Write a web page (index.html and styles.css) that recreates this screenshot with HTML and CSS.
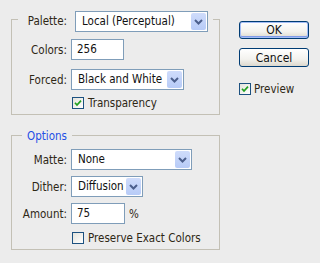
FILE: index.html
```html
<!DOCTYPE html>
<html>
<head>
    <title>Save for Web - Palette Options</title>
    <link rel="stylesheet" href="styles.css">
</head>
<body>
    <div class="dialog">
        <div class="main">
            <div class="group">
                <div class="group-head head-palette">
                    <span class="rule rule-left"></span>
                    <label class="head-label">Palette:</label>
                    <div class="select palette-select">
                        <span class="select-text">Local (Perceptual)</span>
                        <span class="drop"><svg width="15" height="19" viewBox="0 0 15 19"><path d="M4 8 L7.5 11.5 L11 8" /></svg></span>
                    </div>
                    <span class="rule rule-right"></span>
                </div>
                <div class="group-body body-top">
                    <label class="field-label">Colors:</label>
                    <div class="textbox colors-box">256</div>

                    <label class="field-label">Forced:</label>
                    <div class="select forced-select">
                        <span class="select-text">Black and White</span>
                        <span class="drop"><svg width="15" height="19" viewBox="0 0 15 19"><path d="M4 8 L7.5 11.5 L11 8" /></svg></span>
                    </div>

                    <div class="check-row top-check">
                        <span class="checkbox"><svg width="10" height="10" viewBox="0 0 10 10"><path d="M2 4.8 L4 7 L8 2.6" /></svg></span>
                        <span>Transparency</span>
                    </div>
                </div>
            </div>

            <div class="group group-options">
                <div class="group-head head-options">
                    <span class="rule rule-left wide"></span>
                    <span class="group-title">Options</span>
                    <span class="rule rule-right"></span>
                </div>
                <div class="group-body body-options">
                    <label class="field-label">Matte:</label>
                    <div class="select matte-select">
                        <span class="select-text">None</span>
                        <span class="drop"><svg width="15" height="19" viewBox="0 0 15 19"><path d="M4 8 L7.5 11.5 L11 8" /></svg></span>
                    </div>

                    <label class="field-label">Dither:</label>
                    <div class="select dither-select">
                        <span class="select-text">Diffusion</span>
                        <span class="drop"><svg width="15" height="19" viewBox="0 0 15 19"><path d="M4 8 L7.5 11.5 L11 8" /></svg></span>
                    </div>

                    <label class="field-label">Amount:</label>
                    <div class="amount-field">
                        <div class="textbox amount-box">75</div>
                        <span class="unit">%</span>
                    </div>

                    <div class="check-row bottom-check">
                        <span class="checkbox"></span>
                        <span>Preserve Exact Colors</span>
                    </div>
                </div>
            </div>
        </div>

        <div class="side">
            <button class="btn btn-default">OK</button>
            <button class="btn">Cancel</button>
            <div class="check-row preview-check">
                <span class="checkbox"><svg width="10" height="10" viewBox="0 0 10 10"><path d="M2 4.8 L4 7 L8 2.6" /></svg></span>
                <span>Preview</span>
            </div>
        </div>
    </div>
</body>
</html>
```

FILE: styles.css
```css
:root {
    --group-line: #c3c0b5;
    --field-border: #7f9db9;
    --label-color: #2e2715;
    --title-blue: #1f4fe6;
}

body {
    margin: 0;
    background: #ececec;
    font-family: 'DejaVu Sans Condensed', 'DejaVu Sans', sans-serif;
    font-size: 11.5px;
    color: var(--label-color);
}

.dialog {
    display: flex;
    padding: 11px 0 0 11px;
}

.main {
    width: 209px;
}

/* group boxes */

.group-head {
    display: flex;
}

.head-palette {
    height: 21px;
}

.head-options {
    height: 14px;
    align-items: center;
    margin-top: 13px;
}

.rule {
    align-self: stretch;
    border-top: 1px solid var(--group-line);
}

.head-palette .rule {
    margin-top: 8px;
}

.head-options .rule {
    margin-top: 7px;
}

.rule-left {
    width: 6px;
    border-left: 1px solid var(--group-line);
}

.rule-left.wide {
    width: 10px;
}

.rule-right {
    flex: 1;
    border-right: 1px solid var(--group-line);
}

.head-palette .rule-right {
    margin-left: 5px;
}

.head-label {
    width: 49px;
    padding-right: 8px;
    text-align: right;
    line-height: 21px;
}

.group-title {
    color: var(--title-blue);
    padding: 1px 5px 0;
    line-height: 14px;
}

.group-body {
    display: grid;
    grid-template-columns: 55px auto;
    column-gap: 4px;
    align-items: center;
    justify-items: start;
    border: 1px solid var(--group-line);
    border-top: none;
}

.body-top {
    row-gap: 9px;
    padding: 7px 0 5px;
}

.body-options {
    row-gap: 6px;
    padding: 7px 0 5px;
}

.field-label {
    justify-self: end;
    white-space: nowrap;
}

/* inputs */

.textbox,
.select {
    box-sizing: border-box;
    height: 21px;
    border: 1px solid var(--field-border);
    background: #fff;
    color: #111;
    line-height: 19px;
}

.textbox {
    padding-left: 5px;
}

.colors-box {
    width: 53px;
}

.amount-box {
    width: 54px;
}

.select {
    display: flex;
    justify-content: space-between;
    padding: 1px;
}

.select-text {
    padding-left: 5px;
    line-height: 17px;
    white-space: nowrap;
}

.drop {
    width: 15px;
    height: 17px;
    background: linear-gradient(#cfdcfb, #b7cbf7);
    border-radius: 2px;
    overflow: hidden;
}

.drop svg {
    display: block;
    margin-top: -1px;
}

.drop path {
    fill: none;
    stroke: #4c5f8c;
    stroke-width: 2;
}

.palette-select {
    width: 133px;
}

.forced-select {
    width: 113px;
}

.matte-select {
    width: 121px;
}

.dither-select {
    width: 72px;
}

.amount-field {
    display: flex;
    align-items: center;
    gap: 4px;
}

/* checkboxes */

.check-row {
    display: flex;
    align-items: center;
    gap: 4px;
    line-height: 12px;
    white-space: nowrap;
}

.top-check,
.bottom-check {
    grid-column: 2;
    margin-left: 1px;
    margin-top: -2px;
}

.bottom-check {
    margin-top: 2px;
}

.checkbox {
    box-sizing: border-box;
    width: 12px;
    height: 12px;
    border: 1px solid #1c5180;
    background: linear-gradient(135deg, #e3e3dc, #fff);
}

.checkbox svg {
    display: block;
}

.checkbox path {
    fill: none;
    stroke: #21a121;
    stroke-width: 1.7;
}

/* right column */

.side {
    display: flex;
    flex-direction: column;
    margin-left: 19px;
    padding-top: 10px;
}

.btn {
    box-sizing: border-box;
    width: 70px;
    height: 19px;
    padding: 0;
    border: 1px solid #003c74;
    border-radius: 3px;
    background: linear-gradient(#ffffff, #f3f2ee 60%, #dcd8cd);
    font-family: inherit;
    font-size: 12px;
    color: #111;
}

.btn-default {
    height: 18px;
    box-shadow: inset 0 0 0 1px #a4bdf5, inset 0 -1px 0 1px #7f9bea;
    margin-bottom: 9px;
}

.preview-check {
    margin-top: 16px;
    gap: 3px;
}
```
